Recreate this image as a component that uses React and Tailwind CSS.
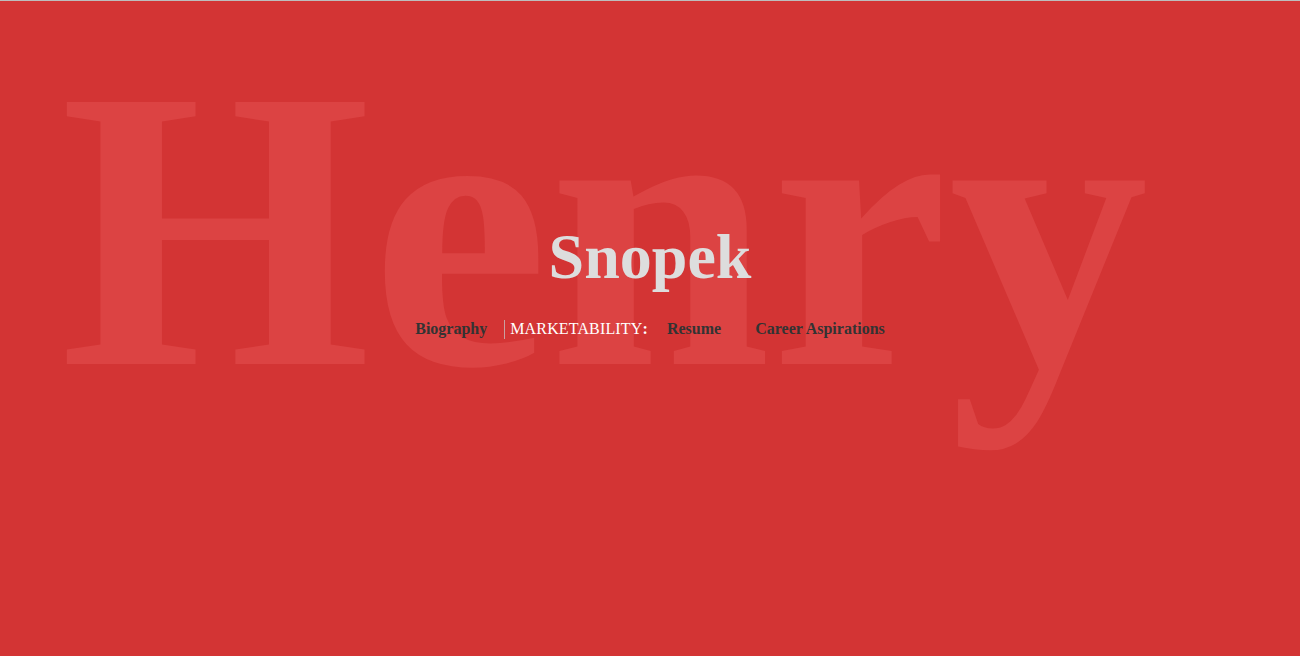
export default function App() {
  const serif = { fontFamily: '"Liberation Serif", "Times New Roman", serif' };
  return (
    <div
      className="relative w-full h-[656px] overflow-hidden bg-[#d33434] border-t border-[#bdbdbd]"
      style={serif}
    >
      <div
        aria-hidden="true"
        className="absolute left-[60px] top-[29px] text-[400px] leading-none font-bold text-[#dc4343] whitespace-nowrap select-none"
      >
        Henry
      </div>
      <div className="relative flex flex-col items-center pt-[216px]">
        <h1 className="text-[64px] leading-[80px] font-bold text-[#dddddd]">Snopek</h1>
        <nav className="mt-[22px] flex items-center text-[16px] leading-[20px]">
          <span className="font-bold text-[#333333]">Biography</span>
          <span className="ml-[17px] w-px h-[19px] bg-[#c9a0a0]"></span>
          <span className="ml-[5px] text-white tracking-[0.15px]">
            MARKETABILITY<span className="font-bold">:</span>
          </span>
          <span className="ml-[19px] font-bold text-[#333333]">Resume</span>
          <span className="ml-[34px] font-bold text-[#333333]">Career Aspirations</span>
        </nav>
      </div>
    </div>
  );
}
